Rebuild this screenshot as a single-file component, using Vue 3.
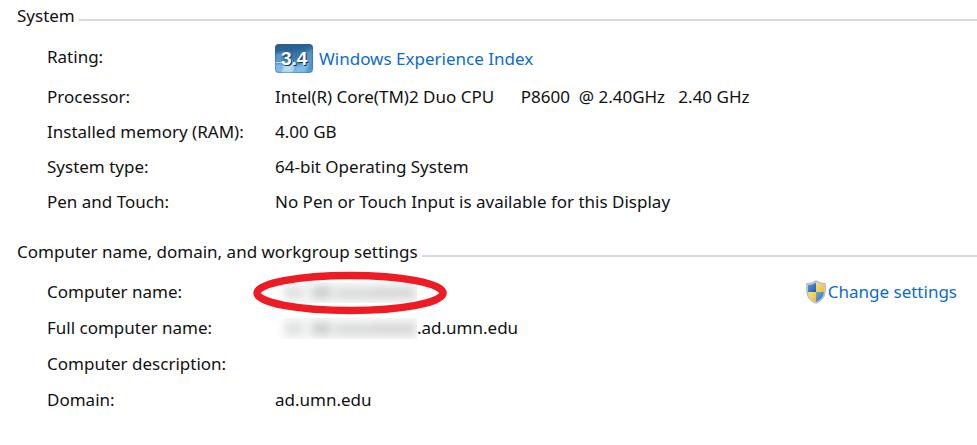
<script setup>
const system = [
  { label: 'Processor:', value: 'Intel(R) Core(TM)2 Duo CPU      P8600  @ 2.40GHz   2.40 GHz' },
  { label: 'Installed memory (RAM):', value: '4.00 GB' },
  { label: 'System type:', value: '64-bit Operating System' },
  { label: 'Pen and Touch:', value: 'No Pen or Touch Input is available for this Display' },
]
</script>

<template>
  <main class="page">
    <section class="group">
      <h2 class="heading">System</h2>
      <dl class="list">
        <div class="row rating">
          <dt>Rating:</dt>
          <dd>
            <svg class="score" viewBox="0 0 38 29" role="img" aria-label="3.4">
              <defs>
                <linearGradient id="tile" x1="0" y1="0" x2="0" y2="1">
                  <stop offset="0" stop-color="#2d6496" />
                  <stop offset="0.45" stop-color="#3977b0" />
                  <stop offset="1" stop-color="#5ca4d8" />
                </linearGradient>
                <clipPath id="tileClip"><rect width="38" height="29" rx="4" /></clipPath>
                <filter id="glow" x="-20%" y="-20%" width="140%" height="140%">
                  <feGaussianBlur stdDeviation=".8" />
                </filter>
              </defs>
              <g clip-path="url(#tileClip)">
                <rect width="38" height="29" fill="url(#tile)" />
                <g filter="url(#glow)">
                  <path d="M0 10Q18 9 38 1V0H0Z" fill="#245787" opacity=".45" />
                  <path d="M0 10Q6 9 9 7L7 18H0Z" fill="#6fa9d6" opacity=".6" />
                  <path d="M0 20H8L5 29H0Z" fill="#7dbbe6" />
                  <path d="M9 20H20L18 29H6Z" fill="#b7dcf4" />
                  <path d="M21 22L35 19L30 29H19Z" fill="#7dbce7" />
                  <path d="M25 12L38 4V18L33 22Z" fill="#6eaad8" opacity=".55" />
                </g>
                <path d="M0 18.500H7" stroke="#b5d9ee" />
              </g>
              <rect x=".5" y=".5" width="37" height="28" rx="4" fill="none" stroke="#1f5d96" stroke-opacity=".3" />
              <text x="7" y="22" class="score-shadow">3.4</text>
              <text x="6" y="21" class="score-text">3.4</text>
            </svg>
            <a href="#">Windows Experience Index</a>
          </dd>
        </div>
        <div v-for="item in system" :key="item.label" class="row">
          <dt>{{ item.label }}</dt>
          <dd>{{ item.value }}</dd>
        </div>
      </dl>
    </section>

    <section class="group names">
      <h2 class="heading">Computer name, domain, and workgroup settings</h2>
      <dl class="list">
        <div class="row">
          <dt>Computer name:</dt>
          <dd class="circled">
            <svg class="redacted" viewBox="0 0 142 21" aria-hidden="true">
              <defs>
                <filter id="soft" filterUnits="userSpaceOnUse" x="-10" y="-20" width="180" height="60">
                  <feGaussianBlur stdDeviation="4" />
                </filter>
                <g id="smudge" filter="url(#soft)">
                  <rect x="8" y="-2" width="152" height="25" fill="#f4f5f5" />
                  <rect x="10" y="5" width="18" height="11" fill="#dedfdf" />
                  <rect x="37" y="4" width="19" height="13" fill="#cdcfcf" />
                  <rect x="60" y="6" width="42" height="11" fill="#d8dad9" />
                  <rect x="98" y="5" width="42" height="12" fill="#d6d7d6" />
                </g>
              </defs>
              <use href="#smudge" />
            </svg>
            <svg class="ring" viewBox="0 0 196 44" aria-hidden="true">
              <ellipse cx="98" cy="22" rx="93" ry="17.5" fill="none" stroke="#ed1c24" stroke-width="7.5" />
            </svg>
          </dd>
          <dd class="action">
            <a href="#">
              <svg class="shield" viewBox="0 0 20 24" aria-hidden="true">
                <defs>
                  <clipPath id="shieldClip">
                    <path d="M10 2.5Q13.5 5 18 5V11Q18 18.5 10 22Q2 18.5 2 11V5Q6.500 5 10 2.500Z" />
                  </clipPath>
                  <linearGradient id="blue" x1="0" y1="0" x2="1" y2="1">
                    <stop offset="0" stop-color="#75a9dc" />
                    <stop offset="1" stop-color="#195fae" />
                  </linearGradient>
                  <linearGradient id="gold" x1="0" y1="0" x2="1" y2="1">
                    <stop offset="0" stop-color="#ffe77f" />
                    <stop offset="1" stop-color="#f0b62b" />
                  </linearGradient>
                </defs>
                <path d="M10 .7Q14 3.500 19.300 3.500V11Q19.300 19.500 10 23.400Q.7 19.500 .7 11V3.500Q6 3.500 10 .7Z" fill="#c9cdd0" stroke="#a9adb0" stroke-width=".8" />
                <g clip-path="url(#shieldClip)">
                  <rect width="10" height="12" fill="url(#blue)" />
                  <rect x="10" width="10" height="12" fill="url(#gold)" />
                  <rect y="12" width="10" height="12" fill="url(#gold)" />
                  <rect x="10" y="12" width="10" height="12" fill="url(#blue)" />
                </g>
              </svg>
              <span>Change settings</span>
            </a>
          </dd>
        </div>
        <div class="row">
          <dt>Full computer name:</dt>
          <dd>
            <svg class="redacted" viewBox="0 0 142 21" aria-hidden="true"><use href="#smudge" /></svg>
            <span>.ad.umn.edu</span>
          </dd>
        </div>
        <div class="row">
          <dt>Computer description:</dt>
          <dd></dd>
        </div>
        <div class="row">
          <dt>Domain:</dt>
          <dd>ad.umn.edu</dd>
        </div>
      </dl>
    </section>
  </main>
</template>

<style>
body {
  margin: 0;
  background: #fff;
}
</style>

<style scoped>
.page {
  padding: 4px 0 24px 17px;
  color: #111;
  font: 17px/24px "Noto Sans", "Open Sans", sans-serif;
}
.heading {
  display: flex;
  align-items: center;
  gap: 4px;
  margin: 0;
  font-size: 17px;
  font-weight: 400;
}
.heading::after {
  content: "";
  flex: 1;
  height: 2px;
  margin-top: 7px;
  background: #d9d9d9;
}
.list {
  margin: 0;
  padding: 10px 20px 0 30px;
}
.row {
  display: flex;
  align-items: center;
  min-height: 35px;
}
.rating {
  min-height: 41px;
}
.rating dt {
  padding-bottom: 4px;
}
.names {
  margin-top: 21px;
}
.names .row {
  min-height: 36px;
}
dt {
  flex: 0 0 228px;
}
dd {
  display: flex;
  align-items: center;
  margin: 0;
  white-space: pre;
}
a {
  display: flex;
  align-items: center;
  color: #0d6bd3;
  text-decoration: none;
}
.score {
  width: 38px;
  height: 29px;
  margin-right: 6px;
}
.score-text,
.score-shadow {
  font: 700 19px "Liberation Sans", sans-serif;
  fill: #fff;
}
.score-shadow {
  fill: #1c3048;
}
.redacted {
  width: 142px;
  height: 21px;
}
.circled {
  position: relative;
}
.ring {
  position: absolute;
  left: -23px;
  top: -11px;
  width: 196px;
  height: 44px;
}
.action {
  margin-left: auto;
}
.shield {
  width: 20px;
  height: 24px;
  margin-right: 2px;
}
</style>
